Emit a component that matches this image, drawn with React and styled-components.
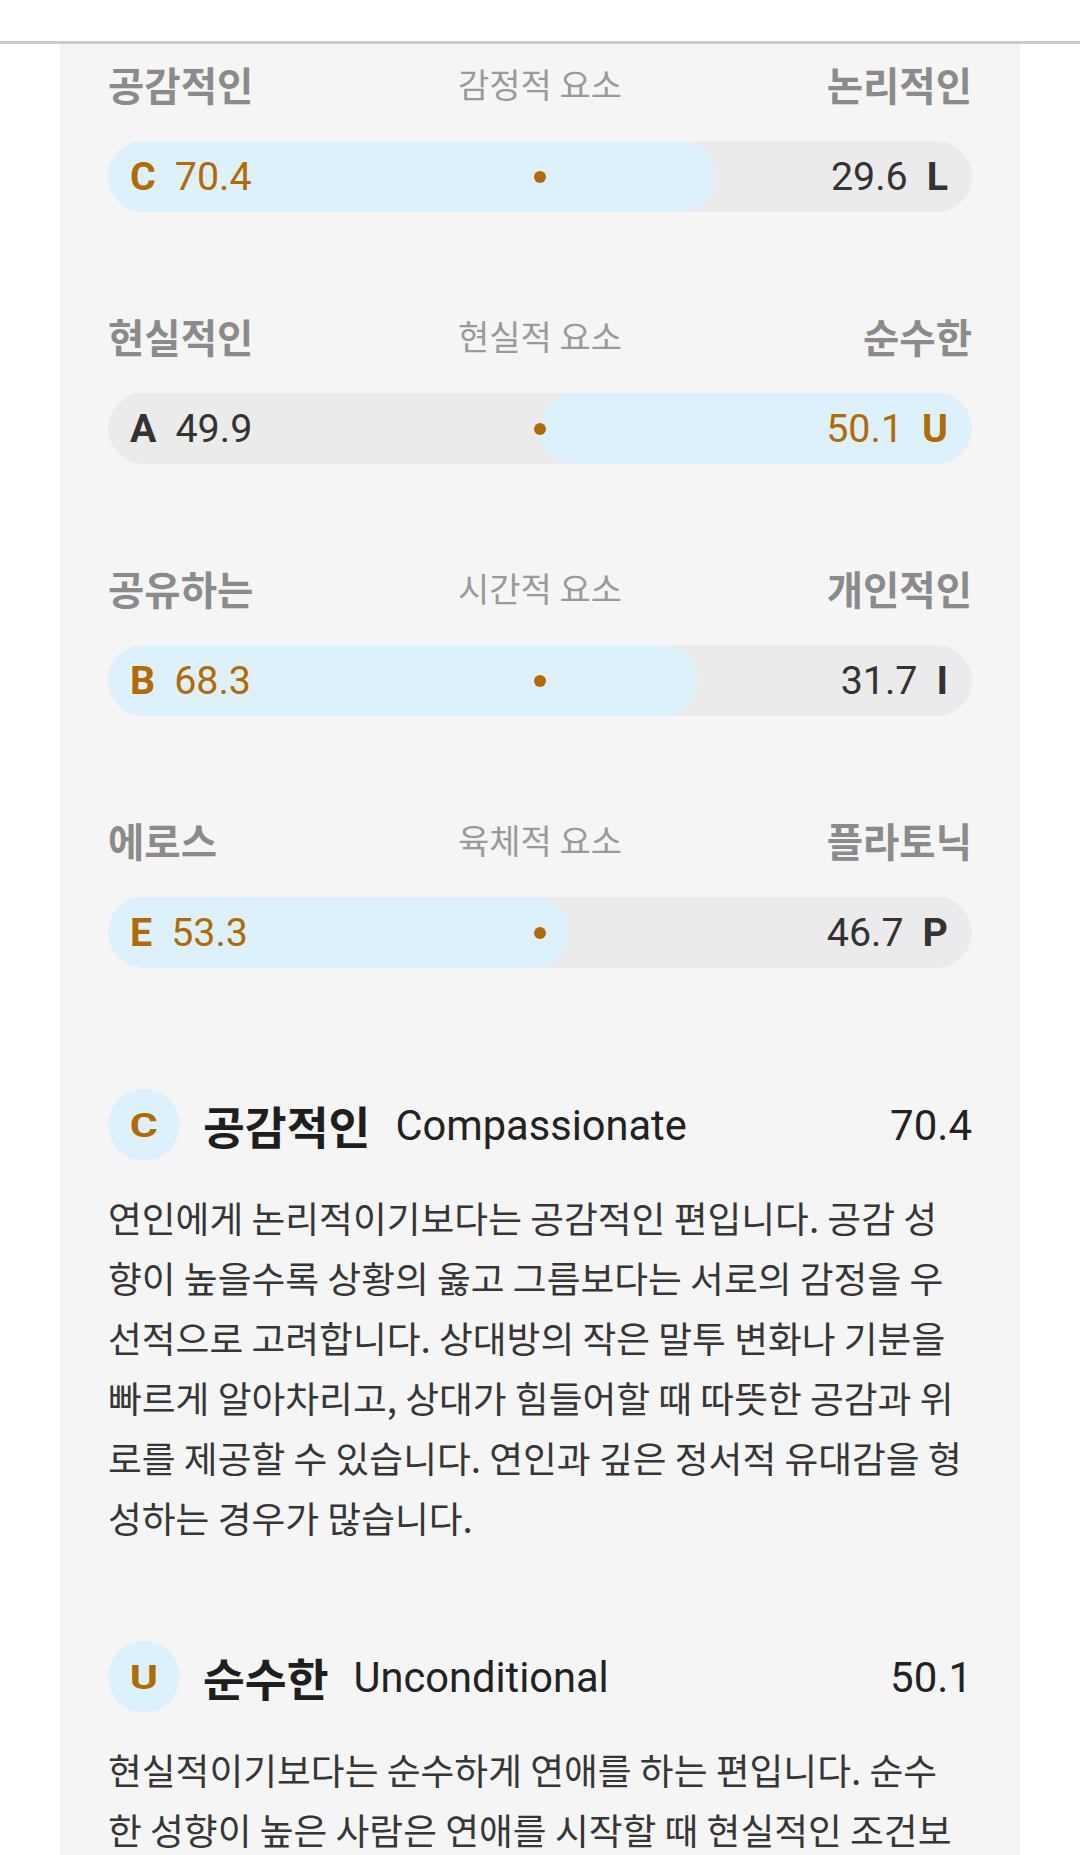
import React from 'react';
import styled, { createGlobalStyle } from 'styled-components';

const GlobalStyle = createGlobalStyle`
  html, body {
    margin: 0;
    padding: 0;
    background: #ffffff;
  }
  body {
    font-family: Roboto, 'Noto Sans CJK KR', sans-serif;
    -webkit-font-smoothing: antialiased;
  }
`;

const AMBER = '#b36b00';
const INK = '#333333';

const TopBar = styled.header`
  height: 41px;
  background: #ffffff;
  border-bottom: 3px solid #cbcbcb;
`;

const Panel = styled.main`
  margin: 0 60px;
  min-height: 1811px;
  padding: 16px 48px 0;
  background: #f5f5f5;
  box-sizing: border-box;
`;

const Scales = styled.section`
  display: flex;
  flex-direction: column;
  gap: 100px;
`;

const ScaleRow = styled.div`
  display: flex;
  flex-direction: column;
  gap: 33px;
`;

const LabelRow = styled.div`
  display: grid;
  grid-template-columns: 1fr auto 1fr;
  align-items: center;
  height: 48px;
`;

const SideLabel = styled.span`
  font-family: 'Noto Sans CJK KR', sans-serif;
  font-size: 39.5px;
  font-weight: 700;
  line-height: 48px;
  color: #8b8b8b;
  text-align: ${p => (p.$right ? 'right' : 'left')};
`;

const AxisLabel = styled.span`
  font-family: 'Noto Sans CJK KR', sans-serif;
  font-size: 34px;
  font-weight: 400;
  line-height: 48px;
  color: #9a9a9a;
  text-align: center;
`;

const Track = styled.div`
  position: relative;
  height: 71px;
  border-radius: 36px;
  background: #ebebeb;
  overflow: hidden;
`;

const Fill = styled.div`
  position: absolute;
  top: 0;
  bottom: 0;
  ${p => (p.$side === 'right' ? 'right: 0;' : 'left: 0;')}
  border-radius: 36px;
  background: #ddf1fc;
`;

const Dot = styled.span`
  position: absolute;
  left: 50%;
  top: 50%;
  width: 12px;
  height: 12px;
  border-radius: 50%;
  background: ${AMBER};
  transform: translate(-50%, -50%);
`;

const TrackContent = styled.div`
  position: relative;
  display: flex;
  align-items: center;
  justify-content: space-between;
  height: 100%;
  padding: 0 24px 0 22px;
`;

const Side = styled.span`
  display: flex;
  align-items: center;
  gap: 19px;
  font-family: Roboto, sans-serif;
  font-size: 39.4px;
  color: ${p => (p.$active ? AMBER : INK)};
`;

const Letter = styled.b`
  font-weight: 700;
`;

const Sections = styled.section`
  margin-top: 121px;
  display: flex;
  flex-direction: column;
  gap: 94px;
`;

const SectionHead = styled.div`
  display: flex;
  align-items: center;
  height: 72px;
`;

const Badge = styled.span`
  display: flex;
  align-items: center;
  justify-content: center;
  flex: none;
  width: 72px;
  height: 72px;
  border-radius: 50%;
  background: #ddf1fc;
  color: ${AMBER};
  font-family: Roboto, sans-serif;
  font-size: 33px;
  font-weight: 700;
  & > span {
    display: inline-block;
    transform: scaleX(1.3);
  }
`;

const Title = styled.h3`
  margin: 0 0 0 23px;
  font-family: 'Noto Sans CJK KR', sans-serif;
  font-size: 45.5px;
  font-weight: 700;
  color: #1e1e1e;
`;

const English = styled.span`
  margin-left: 25px;
  font-family: Roboto, sans-serif;
  font-size: 41.6px;
  color: #222222;
`;

const Score = styled.span`
  margin-left: auto;
  font-family: Roboto, sans-serif;
  font-size: 42px;
  color: #222222;
`;

const Body = styled.p`
  margin: 26px 0 0;
  padding-right: 8px;
  font-family: 'Noto Sans CJK KR', sans-serif;
  font-size: 36.75px;
  line-height: 60px;
  color: #363636;
`;

const scales = [
  { left: '공감적인', axis: '감정적 요소', right: '논리적인', a: ['C', 70.4], b: ['L', 29.6] },
  { left: '현실적인', axis: '현실적 요소', right: '순수한', a: ['A', 49.9], b: ['U', 50.1] },
  { left: '공유하는', axis: '시간적 요소', right: '개인적인', a: ['B', 68.3], b: ['I', 31.7] },
  { left: '에로스', axis: '육체적 요소', right: '플라토닉', a: ['E', 53.3], b: ['P', 46.7] },
];

const traits = [
  {
    letter: 'C',
    name: '공감적인',
    english: 'Compassionate',
    score: '70.4',
    text:
      '연인에게 논리적이기보다는 공감적인 편입니다. 공감 성향이 높을수록 상황의 옳고 그름보다는 서로의 감정을 우선적으로 고려합니다. 상대방의 작은 말투 변화나 기분을 빠르게 알아차리고, 상대가 힘들어할 때 따뜻한 공감과 위로를 제공할 수 있습니다. 연인과 깊은 정서적 유대감을 형성하는 경우가 많습니다.',
  },
  {
    letter: 'U',
    name: '순수한',
    english: 'Unconditional',
    score: '50.1',
    text:
      '현실적이기보다는 순수하게 연애를 하는 편입니다. 순수한 성향이 높은 사람은 연애를 시작할 때 현실적인 조건보다는 상대에게 느끼는 감정과 진심을 더 중요하게 여깁니다. 조건 없이 상대를 있는 그대로 받아들이려 합니다.',
  },
];

const Scale = ({ item }) => {
  const [la, lv] = item.a;
  const [ra, rv] = item.b;
  const leftWins = lv >= rv;
  return (
    <ScaleRow>
      <LabelRow>
        <SideLabel>{item.left}</SideLabel>
        <AxisLabel>{item.axis}</AxisLabel>
        <SideLabel $right>{item.right}</SideLabel>
      </LabelRow>
      <Track>
        <Fill $side={leftWins ? 'left' : 'right'} style={{ width: `${leftWins ? lv : rv}%` }} />
        <Dot />
        <TrackContent>
          <Side $active={leftWins}>
            <Letter>{la}</Letter>
            <span>{lv}</span>
          </Side>
          <Side $active={!leftWins}>
            <span>{rv}</span>
            <Letter>{ra}</Letter>
          </Side>
        </TrackContent>
      </Track>
    </ScaleRow>
  );
};

const App = () => (
  <>
    <GlobalStyle />
    <TopBar />
    <Panel>
      <Scales>
        {scales.map(s => (
          <Scale key={s.axis} item={s} />
        ))}
      </Scales>
      <Sections>
        {traits.map(t => (
          <article key={t.letter}>
            <SectionHead>
              <Badge>
                <span>{t.letter}</span>
              </Badge>
              <Title>{t.name}</Title>
              <English>{t.english}</English>
              <Score>{t.score}</Score>
            </SectionHead>
            <Body>{t.text}</Body>
          </article>
        ))}
      </Sections>
    </Panel>
  </>
);

export default App;
